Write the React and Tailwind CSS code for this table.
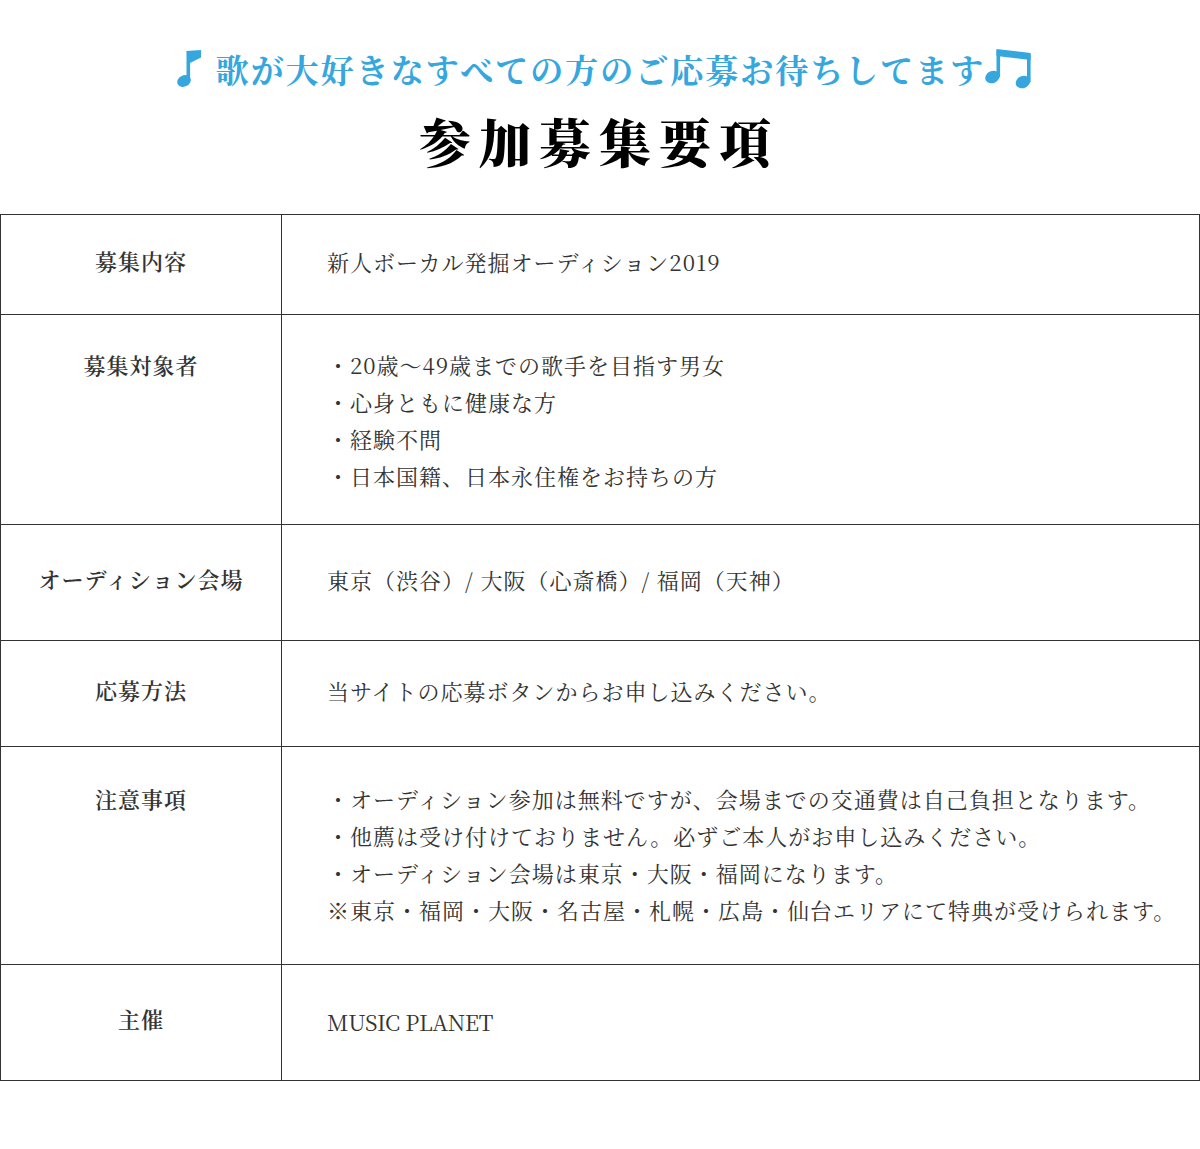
import React from "react";

const font = {
  fontFamily:
    '"Noto Serif CJK JP", "Liberation Serif", "Noto Sans CJK JP", serif',
};

function NoteSingle() {
  return (
    <svg width="25" height="38" viewBox="0 0 25 38" className="text-[#36a7de]">
      <ellipse cx="7" cy="31" rx="7" ry="5.6" transform="rotate(-25 7 31)" fill="currentColor" />
      <rect x="9.5" y="1" width="3.6" height="30" fill="currentColor" />
      <path d="M9.5 1 L24 0 L24 7.5 L13 13 Z" fill="currentColor" />
    </svg>
  );
}

function NoteDouble() {
  return (
    <svg width="50" height="42" viewBox="0 0 50 42" className="text-[#36a7de]">
      <ellipse cx="7.5" cy="29" rx="7.5" ry="6" transform="rotate(-25 7.5 29)" fill="currentColor" />
      <ellipse cx="38" cy="34" rx="7.5" ry="6" transform="rotate(-25 38 34)" fill="currentColor" />
      <rect x="11.5" y="2" width="3.6" height="27" fill="currentColor" />
      <rect x="42" y="6" width="3.6" height="28" fill="currentColor" />
      <path d="M11.5 1 L45.6 5 L45.6 12 L11.5 8 Z" fill="currentColor" />
    </svg>
  );
}

const rows = [
  { label: "募集内容", lines: ["新人ボーカル発掘オーディション2019"], h: "h-[99px]" },
  {
    label: "募集対象者",
    lines: [
      "・20歳〜49歳までの歌手を目指す男女",
      "・心身ともに健康な方",
      "・経験不問",
      "・日本国籍、日本永住権をお持ちの方",
    ],
    h: "h-[210px]",
    pt: "pt-[31px]",
  },
  { label: "オーディション会場", lines: ["東京（渋谷）/ 大阪（心斎橋）/ 福岡（天神）"], h: "h-[116px]" },
  { label: "応募方法", lines: ["当サイトの応募ボタンからお申し込みください。"], h: "h-[106px]" },
  {
    label: "注意事項",
    lines: [
      "・オーディション参加は無料ですが、会場までの交通費は自己負担となります。",
      "・他薦は受け付けておりません。必ずご本人がお申し込みください。",
      "・オーディション会場は東京・大阪・福岡になります。",
      "※東京・福岡・大阪・名古屋・札幌・広島・仙台エリアにて特典が受けられます。",
    ],
    h: "h-[218px]",
    pt: "pt-[33px]",
  },
  { label: "主催", lines: ["MUSIC PLANET"], h: "h-[116px]", latin: true },
];

export default function App() {
  return (
    <div className="w-[1200px] bg-white pb-[69px]" style={font}>
      <div className="flex items-center justify-center pt-[48px] pl-[12px] h-[90px]">
        <NoteSingle />
        <span className="ml-[14px] text-[33px] leading-[40px] tracking-[2px] font-bold text-[#36a7de]">
          歌が大好きなすべての方のご応募お待ちしてます
        </span>
        <NoteDouble />
      </div>
      <h1 className="mt-[21px] pr-[2px] text-center text-[52px] leading-[60px] tracking-[8px] font-black text-black">
        参加募集要項
      </h1>
      <div className="mt-[43px] border border-[#333] w-[1200px]">
        {rows.map((r, i) => (
          <div
            key={i}
            className={`grid grid-cols-[281px_1fr] ${r.h} ${i > 0 ? "border-t border-[#333]" : ""}`}
          >
            <div
              className={`border-r border-[#333] flex justify-center text-[22px] font-semibold tracking-[1px] text-[#333] ${
                r.pt ? `items-start ${r.pt}` : "items-center pb-[8px]"
              }`}
            >
              <span className="leading-[37px]">{r.label}</span>
            </div>
            <div
              className={`pl-[45px] flex flex-col text-[22px] text-[#333] ${
                r.latin ? "tracking-[-0.3px]" : "tracking-[1px]"
              } ${r.pt ? r.pt : r.latin ? "justify-center pb-[2px]" : "justify-center pb-[7px]"}`}
            >
              {r.lines.map((l, j) => (
                <div key={j} className="leading-[37px] whitespace-nowrap">
                  {l}
                </div>
              ))}
            </div>
          </div>
        ))}
      </div>
    </div>
  );
}
